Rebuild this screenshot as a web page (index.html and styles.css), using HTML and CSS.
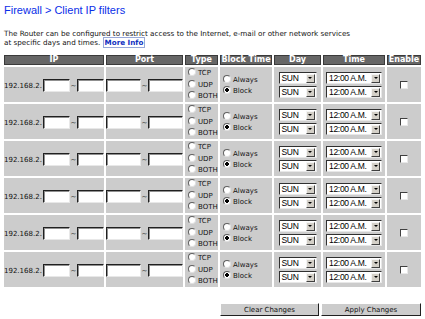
FILE: index.html
```html
<!DOCTYPE html>
<html>
<head>
<meta charset="utf-8">
<link rel="stylesheet" href="styles.css">
</head>
<body>
<h1 class="title">Firewall &gt; Client IP filters</h1>
<p class="desc">The Router can be configured to restrict access to the Internet, e-mail or other network services<br>at specific days and times. <a class="more">More Info</a></p>
<table class="filters">
<colgroup><col class="c-ip"><col class="c-port"><col class="c-type"><col class="c-block"><col class="c-day"><col class="c-time"><col class="c-en"></colgroup>
<thead><tr><th>IP</th><th>Port</th><th>Type</th><th>Block Time</th><th>Day</th><th>Time</th><th>Enable</th></tr></thead>
<tbody id="rows">
<tr>
<td><div class="ip"><span>192.168.2.</span><span class="inp w-ip"></span><span class="tl">~</span><span class="inp w-ip"></span></div></td>
<td><div class="port"><span class="inp w-port"></span><span class="tl">~</span><span class="inp w-port"></span></div></td>
<td><div class="radios"><label><span class="rad"></span>TCP</label><label><span class="rad"></span>UDP</label><label><span class="rad"></span>BOTH</label></div></td>
<td><div class="radios bt"><label><span class="rad"></span>Always</label><label><span class="rad on"></span>Block</label></div></td>
<td><div class="sels"><div class="sel w-day"><span class="v">SUN</span><span class="arr"></span></div><div class="sel w-day"><span class="v">SUN</span><span class="arr"></span></div></div></td>
<td><div class="sels"><div class="sel w-time"><span class="v">12:00 A.M.</span><span class="arr"></span></div><div class="sel w-time"><span class="v">12:00 A.M.</span><span class="arr"></span></div></div></td>
<td><div class="chk"><span class="box"></span></div></td>
</tr>
<tr>
<td><div class="ip"><span>192.168.2.</span><span class="inp w-ip"></span><span class="tl">~</span><span class="inp w-ip"></span></div></td>
<td><div class="port"><span class="inp w-port"></span><span class="tl">~</span><span class="inp w-port"></span></div></td>
<td><div class="radios"><label><span class="rad"></span>TCP</label><label><span class="rad"></span>UDP</label><label><span class="rad"></span>BOTH</label></div></td>
<td><div class="radios bt"><label><span class="rad"></span>Always</label><label><span class="rad on"></span>Block</label></div></td>
<td><div class="sels"><div class="sel w-day"><span class="v">SUN</span><span class="arr"></span></div><div class="sel w-day"><span class="v">SUN</span><span class="arr"></span></div></div></td>
<td><div class="sels"><div class="sel w-time"><span class="v">12:00 A.M.</span><span class="arr"></span></div><div class="sel w-time"><span class="v">12:00 A.M.</span><span class="arr"></span></div></div></td>
<td><div class="chk"><span class="box"></span></div></td>
</tr>
<tr>
<td><div class="ip"><span>192.168.2.</span><span class="inp w-ip"></span><span class="tl">~</span><span class="inp w-ip"></span></div></td>
<td><div class="port"><span class="inp w-port"></span><span class="tl">~</span><span class="inp w-port"></span></div></td>
<td><div class="radios"><label><span class="rad"></span>TCP</label><label><span class="rad"></span>UDP</label><label><span class="rad"></span>BOTH</label></div></td>
<td><div class="radios bt"><label><span class="rad"></span>Always</label><label><span class="rad on"></span>Block</label></div></td>
<td><div class="sels"><div class="sel w-day"><span class="v">SUN</span><span class="arr"></span></div><div class="sel w-day"><span class="v">SUN</span><span class="arr"></span></div></div></td>
<td><div class="sels"><div class="sel w-time"><span class="v">12:00 A.M.</span><span class="arr"></span></div><div class="sel w-time"><span class="v">12:00 A.M.</span><span class="arr"></span></div></div></td>
<td><div class="chk"><span class="box"></span></div></td>
</tr>
<tr>
<td><div class="ip"><span>192.168.2.</span><span class="inp w-ip"></span><span class="tl">~</span><span class="inp w-ip"></span></div></td>
<td><div class="port"><span class="inp w-port"></span><span class="tl">~</span><span class="inp w-port"></span></div></td>
<td><div class="radios"><label><span class="rad"></span>TCP</label><label><span class="rad"></span>UDP</label><label><span class="rad"></span>BOTH</label></div></td>
<td><div class="radios bt"><label><span class="rad"></span>Always</label><label><span class="rad on"></span>Block</label></div></td>
<td><div class="sels"><div class="sel w-day"><span class="v">SUN</span><span class="arr"></span></div><div class="sel w-day"><span class="v">SUN</span><span class="arr"></span></div></div></td>
<td><div class="sels"><div class="sel w-time"><span class="v">12:00 A.M.</span><span class="arr"></span></div><div class="sel w-time"><span class="v">12:00 A.M.</span><span class="arr"></span></div></div></td>
<td><div class="chk"><span class="box"></span></div></td>
</tr>
<tr>
<td><div class="ip"><span>192.168.2.</span><span class="inp w-ip"></span><span class="tl">~</span><span class="inp w-ip"></span></div></td>
<td><div class="port"><span class="inp w-port"></span><span class="tl">~</span><span class="inp w-port"></span></div></td>
<td><div class="radios"><label><span class="rad"></span>TCP</label><label><span class="rad"></span>UDP</label><label><span class="rad"></span>BOTH</label></div></td>
<td><div class="radios bt"><label><span class="rad"></span>Always</label><label><span class="rad on"></span>Block</label></div></td>
<td><div class="sels"><div class="sel w-day"><span class="v">SUN</span><span class="arr"></span></div><div class="sel w-day"><span class="v">SUN</span><span class="arr"></span></div></div></td>
<td><div class="sels"><div class="sel w-time"><span class="v">12:00 A.M.</span><span class="arr"></span></div><div class="sel w-time"><span class="v">12:00 A.M.</span><span class="arr"></span></div></div></td>
<td><div class="chk"><span class="box"></span></div></td>
</tr>
<tr>
<td><div class="ip"><span>192.168.2.</span><span class="inp w-ip"></span><span class="tl">~</span><span class="inp w-ip"></span></div></td>
<td><div class="port"><span class="inp w-port"></span><span class="tl">~</span><span class="inp w-port"></span></div></td>
<td><div class="radios"><label><span class="rad"></span>TCP</label><label><span class="rad"></span>UDP</label><label><span class="rad"></span>BOTH</label></div></td>
<td><div class="radios bt"><label><span class="rad"></span>Always</label><label><span class="rad on"></span>Block</label></div></td>
<td><div class="sels"><div class="sel w-day"><span class="v">SUN</span><span class="arr"></span></div><div class="sel w-day"><span class="v">SUN</span><span class="arr"></span></div></div></td>
<td><div class="sels"><div class="sel w-time"><span class="v">12:00 A.M.</span><span class="arr"></span></div><div class="sel w-time"><span class="v">12:00 A.M.</span><span class="arr"></span></div></div></td>
<td><div class="chk"><span class="box"></span></div></td>
</tr>
</tbody>
</table>
<div class="actions"><button class="btn b-clear">Clear Changes</button><button class="btn b-apply">Apply Changes</button></div>
</body>
</html>
```
FILE: styles.css
```css
html, body { margin: 0; background: #fff; }
body {
  padding: 0 4px;
  width: 417px;
  font-family: "DejaVu Sans", Verdana, sans-serif;
  font-size: 7px;
  color: #111;
}
.title {
  margin: 0;
  padding-top: 3px;
  font: 11px/14px "Liberation Sans", Arial, sans-serif;
  color: #0a2ee8;
}
.desc {
  margin: 12px 0 0;
  line-height: 9px;
  font-size: 7.2px;
}
.more {
  font-weight: bold;
  color: #1030c0;
  border: 1px solid #98a8d8;
  padding: 0 1px;
}
.filters {
  margin: 6px -2px 0;
  width: 421px;
  table-layout: fixed;
  border-collapse: separate;
  border-spacing: 2px;
}
.c-ip { width: 100px; }
.c-port { width: 77px; }
.c-type { width: 33px; }
.c-block { width: 52px; }
.c-day { width: 47px; }
.c-time { width: 62px; }
.c-en { width: 34px; }
.filters th {
  background: #666;
  color: #fff;
  font-size: 8px;
  font-weight: bold;
  height: 8px;
  line-height: 8px;
  padding: 0;
  border: 1px solid #3a3a3a;
}
.filters td {
  background: #ccc;
  height: 35px;
  padding: 0;
  vertical-align: middle;
}
.ip, .port { display: flex; align-items: center; padding-top: 2px; }
.ip > span:first-child { width: 39px; }
.inp {
  display: inline-block;
  height: 13px;
  box-sizing: border-box;
  background: #fff;
  border: 1px solid;
  border-color: #202020 #e8e8e8 #e8e8e8 #202020;
  box-shadow: inset 1px 1px 0 #909090;
}
.w-ip { width: 27px; }
.w-port { width: 35px; }
.tl { width: 7px; text-align: center; }
.radios { display: flex; flex-direction: column; padding-left: 3px; }
.radios label { display: flex; align-items: flex-start; height: 11.5px; line-height: 12px; overflow: hidden; }
.radios .rad { margin-top: 1px; margin-right: 2px; flex: none; }
.radios.bt label { height: 11px; line-height: 13px; }
.rad {
  display: inline-block;
  width: 8px;
  height: 8px;
  box-sizing: border-box;
  border-radius: 50%;
  background: #fff;
  border: 1px solid;
  border-color: #606060 #e0e0e0 #e0e0e0 #606060;
}
.rad.on {
  background: radial-gradient(circle, #000 0 1.6px, #fff 2px);
}
.sels { display: flex; flex-direction: column; gap: 2px; align-items: center; padding-top: 1px; }
.sel {
  display: flex;
  align-items: center;
  height: 12px;
  box-sizing: border-box;
  background: #fff;
  border: 1px solid;
  border-color: #303030 #e8e8e8 #e8e8e8 #303030;
  font: 8.5px "Liberation Sans", Arial, sans-serif;
  letter-spacing: -0.3px;
  color: #000;
}
.w-day { width: 38px; }
.w-time { width: 56px; }
.sel .v { flex: 1; padding-left: 2px; }
.arr {
  width: 9px;
  height: 9px;
  margin-right: 1px;
  box-sizing: border-box;
  background: #d4d0c8;
  border: 1px solid;
  border-color: #f4f4f4 #404040 #404040 #f4f4f4;
  display: flex;
  align-items: center;
  justify-content: center;
}
.arr::after {
  content: "";
  border-left: 2px solid transparent;
  border-right: 2px solid transparent;
  border-top: 2px solid #000;
}
.chk { display: flex; justify-content: center; padding-top: 1px; }
.box {
  width: 8px;
  height: 8px;
  box-sizing: border-box;
  background: #fff;
  border: 1px solid;
  border-color: #404040 #e8e8e8 #e8e8e8 #404040;
}
.actions { display: flex; justify-content: flex-end; gap: 2px; margin-top: 14px; }
.btn {
  height: 13px;
  box-sizing: border-box;
  padding: 0;
  background: #cccccc;
  border: 1px solid;
  border-color: #ffffff #202020 #202020 #ffffff;
  font: 7px "DejaVu Sans", Verdana, sans-serif;
  color: #111;
  line-height: 10px;
}
.b-clear { width: 99px; }
.b-apply { width: 100px; }
```
